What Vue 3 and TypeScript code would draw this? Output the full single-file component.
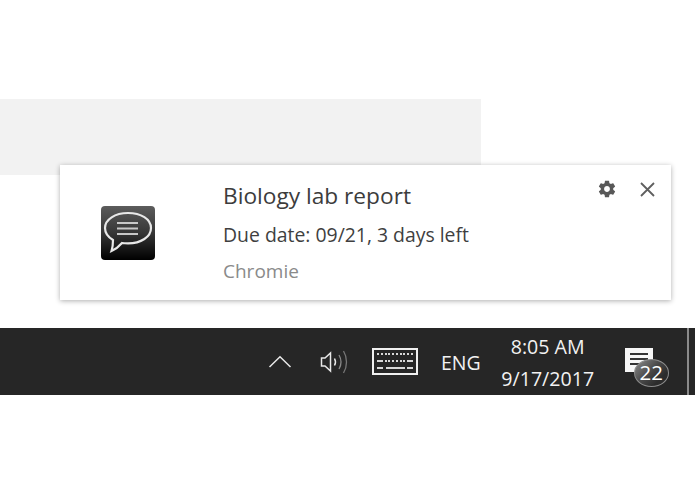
<script setup lang="ts">
const trayLabel = 'ENG'
const clock = { time: '8:05 AM', date: '9/17/2017' }
const unread = 22
</script>

<template>
  <div class="page">
    <div class="band"></div>

    <section class="toast">
      <div class="app-icon">
        <svg width="54" height="54" viewBox="0 0 54 54">
          <defs>
            <linearGradient id="tile" x1="0" y1="0" x2="0" y2="1">
              <stop offset="0" stop-color="#5c5c5c" />
              <stop offset="0.5" stop-color="#363636" />
              <stop offset="1" stop-color="#000" />
            </linearGradient>
          </defs>
          <rect width="54" height="54" rx="4" fill="url(#tile)" />
          <path
            d="M27 7C14 7 4 13.500 4 22c0 5 3 9 8 12 0 4-.5 8-1.500 11 3.500-1.500 7.500-4.500 10.500-8 2 .3 4 .4 6 .4 13 0 23-6.500 23-15.400S40 7 27 7z"
            fill="none"
            stroke="#e8e8e8"
            stroke-width="2.200"
          />
          <path d="M16 17h21M16 22.500h21M16 28h21" stroke="#c8c8c8" stroke-width="2.200" />
        </svg>
      </div>

      <div class="copy">
        <h1 class="title">Biology lab report</h1>
        <p class="message">Due date: 09/21, 3 days left</p>
        <p class="source">Chromie</p>
      </div>

      <div class="actions">
        <svg class="gear" width="20" height="20" viewBox="0 0 24 24">
          <path
            fill="#585858"
            d="M19.430 12.980c.04-.32.07-.64.07-.98s-.03-.66-.07-.98l2.110-1.650c.19-.15.24-.42.120-.64l-2-3.460c-.12-.22-.39-.3-.61-.22l-2.490 1c-.52-.4-1.080-.73-1.690-.98l-.38-2.650A.488.488 0 0 0 14 2h-4c-.25 0-.46.18-.49.420l-.38 2.650c-.61.25-1.170.59-1.690.98l-2.490-1c-.23-.09-.49 0-.61.220l-2 3.460c-.13.22-.07.49.12.64l2.110 1.650c-.04.32-.07.65-.07.98s.03.66.07.98l-2.110 1.650c-.19.15-.24.42-.12.64l2 3.460c.12.22.39.3.61.22l2.490-1c.52.4 1.080.73 1.690.98l.38 2.650c.03.24.24.42.49.42h4c.25 0 .46-.18.49-.42l.38-2.650c.61-.25 1.170-.59 1.690-.98l2.490 1c.23.09.49 0 .61-.22l2-3.460c.12-.22.07-.49-.12-.64l-2.110-1.650zM12 15.500c-1.930 0-3.500-1.570-3.500-3.500s1.570-3.500 3.500-3.500 3.500 1.570 3.500 3.500-1.570 3.500-3.500 3.500z"
          />
        </svg>
        <svg class="close" width="15" height="15" viewBox="0 0 15 15">
          <path d="M1 1l13 13M14 1L1 14" stroke="#5f5f5f" stroke-width="1.800" fill="none" />
        </svg>
      </div>
    </section>

    <footer class="taskbar">
      <svg class="chevron" width="24" height="13" viewBox="0 0 24 13">
        <path d="M1.500 12L12 1.700 22.500 12" fill="none" stroke="#e8e8e8" stroke-width="1.500" />
      </svg>

      <svg class="speaker" width="29" height="26" viewBox="0 0 29 26">
        <path d="M1.500 9h3.500l5.500-5v18l-5.500-5H1.500z" fill="none" stroke="#e8e8e8" stroke-width="1.500" />
        <path d="M14.500 9.500c1.300 2.300 1.300 4.700 0 7" fill="none" stroke="#e8e8e8" stroke-width="1.500" />
        <path d="M19 6c2.600 4.500 2.600 9.500 0 14" fill="none" stroke="#8a8a8a" stroke-width="1.300" />
        <path d="M23.500 2c4 6.500 4 15.500 0 22" fill="none" stroke="#777" stroke-width="1.300" />
      </svg>

      <div class="keyboard">
        <div class="key-row">
          <i v-for="k in 10" :key="k"></i>
        </div>
        <div class="key-row">
          <i class="wide"></i>
          <i v-for="k in 6" :key="k"></i>
          <i class="wide"></i>
        </div>
        <div class="key-row">
          <i class="wide"></i><i class="space"></i><i class="wide"></i>
        </div>
      </div>

      <span class="lang">{{ trayLabel }}</span>

      <div class="clock">
        <span>{{ clock.time }}</span>
        <span>{{ clock.date }}</span>
      </div>

      <div class="notif">
        <div class="bubble">
          <i></i><i></i><i></i>
        </div>
        <span class="count">{{ unread }}</span>
      </div>

      <div class="edge"></div>
    </footer>
  </div>
</template>

<style>
html,
body {
  background: #fff;
}
</style>

<style scoped>
.page {
  position: relative;
  width: 695px;
  height: 494px;
  padding-top: 99px;
  box-sizing: border-box;
  overflow: hidden;
  font-family: 'Open Sans', 'Noto Sans', sans-serif;
}

.band {
  width: 481px;
  height: 76px;
  background: #f2f2f2;
}

.toast {
  position: relative;
  display: flex;
  width: 611px;
  height: 135px;
  margin: -10px 0 0 60px;
  box-sizing: border-box;
  background: #fff;
  box-shadow: 0 1px 5px rgba(0, 0, 0, 0.32);
}

.app-icon {
  width: 54px;
  height: 54px;
  margin: 41px 0 0 41px;
}

.copy {
  margin-left: 68px;
  padding-top: 15px;
}

.title,
.message,
.source {
  margin: 0;
  font-weight: 400;
  white-space: nowrap;
}

.title {
  font-size: 22.700px;
  line-height: 31px;
  color: #3c3c3c;
}

.message {
  margin-top: 12px;
  font-size: 19.400px;
  line-height: 24px;
  color: #3f3f3f;
}

.source {
  margin-top: 12px;
  font-size: 19px;
  line-height: 24px;
  color: #8a8a8a;
}

.actions {
  position: absolute;
  top: 14px;
  right: 16px;
  display: flex;
  align-items: center;
  gap: 23px;
}

.taskbar {
  display: flex;
  align-items: center;
  height: 67px;
  margin-top: 28px;
  padding-left: 268px;
  background: #262626;
  color: #f2f2f2;
}

.chevron {
  flex: none;
}

.speaker {
  flex: none;
  margin-left: 28px;
}

.keyboard {
  flex: none;
  display: flex;
  flex-direction: column;
  gap: 5px;
  box-sizing: border-box;
  width: 46px;
  height: 27px;
  margin-left: 23px;
  padding: 3px 3px 0;
  border: 2px solid #f0f0f0;
}

.key-row {
  display: flex;
  justify-content: space-between;
}

.key-row i {
  width: 2px;
  height: 2px;
  background: #d8d8d8;
}

.key-row i.wide {
  width: 6px;
}

.key-row i.space {
  width: 19px;
}

.lang {
  margin-top: 2px;
  margin-left: 23px;
  font-size: 19.500px;
}

.clock {
  display: flex;
  flex-direction: column;
  align-items: center;
  width: 92px;
  margin-top: 2px;
  margin-left: 21px;
  font-size: 19.600px;
  line-height: 32px;
}

.notif {
  position: relative;
  flex: none;
  align-self: flex-start;
  width: 44px;
  height: 39px;
  margin-top: 20px;
  margin-left: 31px;
}

.bubble {
  display: flex;
  flex-direction: column;
  gap: 3px;
  width: 28px;
  height: 24px;
  padding: 5px 5px;
  box-sizing: border-box;
  background: #f6f6f6;
}

.bubble i {
  display: block;
  height: 2px;
  background: #333;
}

.count {
  position: absolute;
  left: 9px;
  top: 11px;
  width: 35px;
  height: 28px;
  border: 1.500px solid #8d8d8d;
  border-radius: 50%;
  box-sizing: border-box;
  background: linear-gradient(135deg, #8c8c8c 0%, #4a4a4a 45%, #2c2c2c 75%);
  text-align: center;
  font-size: 20.500px;
  line-height: 25px;
  font-weight: 500;
  color: #fff;
}

.edge {
  position: absolute;
  left: 687px;
  top: 328px;
  width: 2px;
  height: 67px;
  background: #8a8a8a;
}
</style>
